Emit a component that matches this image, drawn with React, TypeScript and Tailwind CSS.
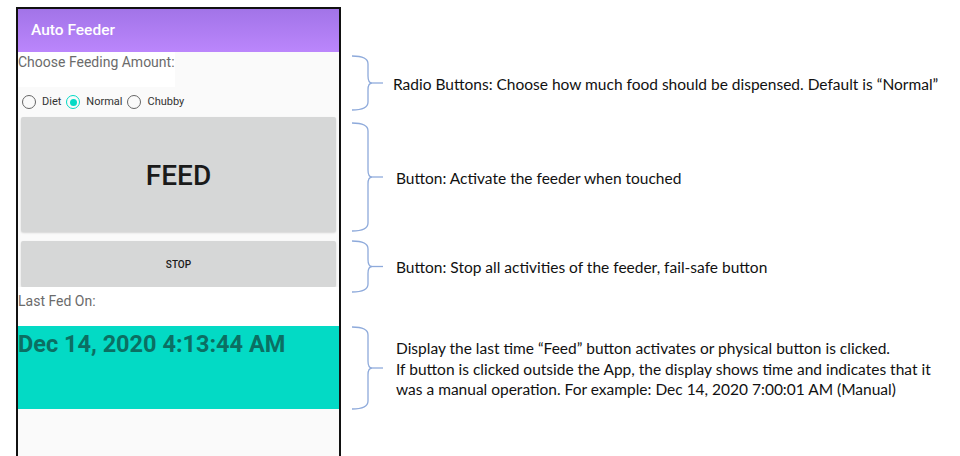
import React from 'react';

const notes = [
  { h: 56, gap: 55, ml: 'ml-[7px]', lines: ['Radio Buttons: Choose how much food should be dispensed. Default is \u201cNormal\u201d'] },
  { h: 110, gap: 11, ml: 'ml-[10px]', lines: ['Button: Activate the feeder when touched'] },
  { h: 53, gap: 8, ml: 'ml-[10px]', lines: ['Button: Stop all activities of the feeder, fail-safe button'] },
  {
    h: 84,
    gap: 33,
    ml: 'ml-[10px]',
    lines: [
      'Display the last time \u201cFeed\u201d button activates or physical button is clicked.',
      'If button is clicked outside the App, the display shows time and indicates that it',
      'was a manual operation. For example: Dec 14, 2020 7:00:01 AM (Manual)',
    ],
  },
];

function Brace({ h }: { h: number }) {
  const m = h / 2;
  return (
    <svg width="34" height={h} viewBox={`0 0 34 ${h}`} className="shrink-0">
      <path
        d={`M0,1 Q16,1 16,9 L16,${m - 7} Q16,${m} 20,${m} Q16,${m} 16,${m + 7} L16,${h - 9} Q16,${h - 1} 0,${h - 1}`}
        fill="none"
        stroke="#8eaadb"
        strokeWidth="1.3"
      />
      <line x1="20" y1={m} x2="31" y2={m} stroke="#8eaadb" strokeWidth="1.3" />
    </svg>
  );
}

function Radio({ label, checked }: { label: string; checked?: boolean }) {
  return (
    <div className="flex items-center gap-[6px]">
      <span
        className={`flex h-[14px] w-[14px] items-center justify-center rounded-full border-[1.5px] ${
          checked ? 'border-[#03dac5]' : 'border-[#666]'
        }`}
      >
        {checked && <span className="h-[7px] w-[7px] rounded-full bg-[#03dac5]" />}
      </span>
      <span className="text-[11px] text-[#333]">{label}</span>
    </div>
  );
}

export default function App() {
  return (
    <div className="flex h-[456px] w-[960px] overflow-hidden bg-white" style={{ fontFamily: 'Roboto, sans-serif' }}>
      {/* phone */}
      <div className="ml-[16px] mt-[7px] flex h-[460px] w-[325px] shrink-0 flex-col border-x-2 border-t-2 border-[#111] bg-[#fafafa]">
        <div className="flex h-[43px] items-center bg-gradient-to-b from-[#a274e8] to-[#bb86fc] pl-[13px] text-[15.5px] font-medium text-white">
          Auto Feeder
        </div>
        <div className="h-[35px] w-[157px] bg-white text-[14px] text-[#6b6b6b]">Choose Feeding Amount:</div>
        <div className="flex h-[30px] items-center gap-[5px] pl-[4px]">
          <Radio label="Diet" />
          <Radio label="Normal" checked />
          <Radio label="Chubby" />
        </div>
        <div className="mx-[3px] flex h-[115px] items-center justify-center rounded-[2px] bg-[#d6d7d7] pt-[2px] text-[28px] font-medium text-[#1a1a1a] shadow-[0_1px_2px_rgba(0,0,0,0.15)]">
          FEED
        </div>
        <div className="mx-[3px] mt-[9px] flex h-[46px] items-center justify-center rounded-[2px] bg-[#d6d7d7] text-[10px] font-medium text-[#1a1a1a] shadow-[0_1px_2px_rgba(0,0,0,0.15)]">
          STOP
        </div>
        <div className="h-[39px] bg-white pt-[4px] text-[14px] text-[#6b6b6b]">Last Fed On:</div>
        <div className="h-[83px] bg-[#03dac5] pt-[1px] text-[23.5px] font-bold text-[#0b6f63]">Dec 14, 2020 4:13:44 AM</div>
      </div>

      {/* annotations */}
      <div className="ml-[11px] flex flex-col" style={{ fontFamily: 'Lato, sans-serif' }}>
        {notes.map((n, i) => (
          <div key={i} className="flex shrink-0 items-center" style={{ height: n.h, marginTop: n.gap }}>
            <Brace h={n.h} />
            <div className={`${n.ml} whitespace-nowrap pt-[2px] text-[15.5px] leading-[20.5px] text-[#111]`}>
              {n.lines.map((l) => (
                <div key={l}>{l}</div>
              ))}
            </div>
          </div>
        ))}
      </div>
    </div>
  );
}
